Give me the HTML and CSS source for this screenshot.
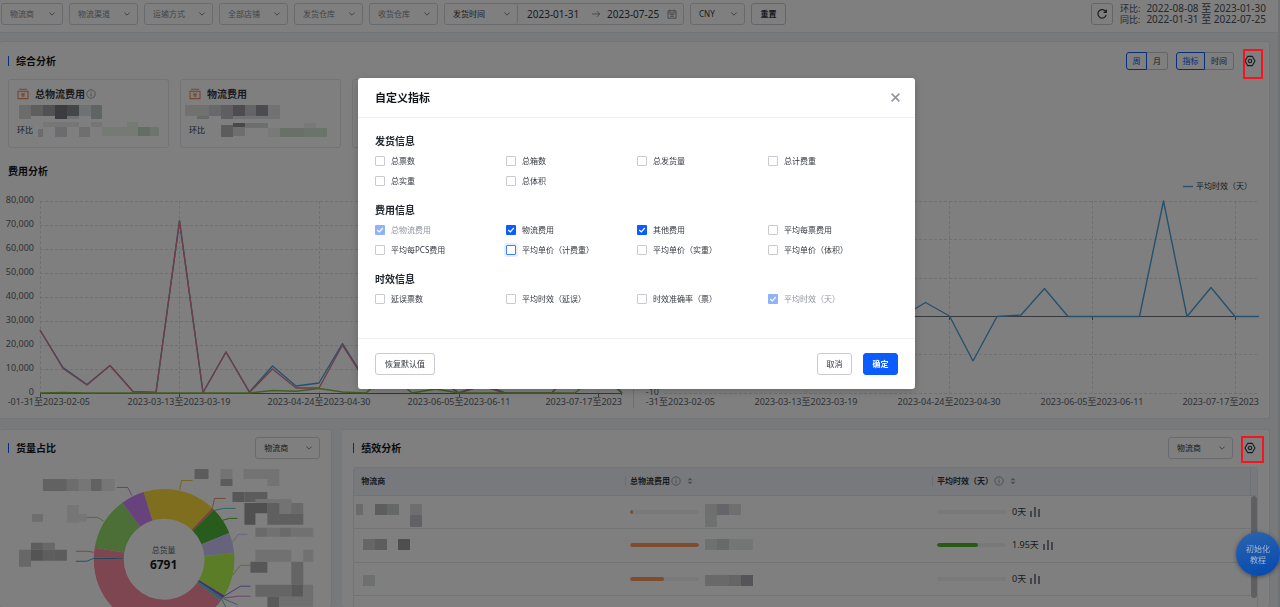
FILE: index.html
```html
<!DOCTYPE html>
<html lang="zh-CN">
<head>
<meta charset="utf-8">
<title>物流分析</title>
<link rel="stylesheet" href="styles.css">
</head>
<body>
<svg class="defs" aria-hidden="true">
  <symbol id="chev" viewBox="0 0 8 8"><path d="M1.4 2.6 4 5.2 6.6 2.6" fill="none" stroke="currentColor" stroke-width="1"/></symbol>
  <symbol id="info" viewBox="0 0 10 10"><circle cx="5" cy="5" r="4.2" fill="none" stroke="currentColor" stroke-width=".8"/><path d="M5 4.3V7.4M5 2.6v.9" stroke="currentColor" stroke-width=".9"/></symbol>
  <symbol id="gear" viewBox="0 0 12 12"><path d="M3.6 1.4h4.8L11 6 8.4 10.6H3.6L1 6Z" fill="none" stroke="currentColor" stroke-width="1.1" stroke-linejoin="round"/><circle cx="6" cy="6" r="1.7" fill="none" stroke="currentColor" stroke-width="1.1"/></symbol>
  <symbol id="money" viewBox="0 0 12 12"><path d="M1 3.2h10v7.4H1ZM2 1.3h8" fill="none" stroke="currentColor" stroke-width="1.1"/><path d="M4.2 4.4 6 6.3l1.8-1.9M6 6.3v3M4.3 6.5h3.4M4.3 7.9h3.4" fill="none" stroke="currentColor" stroke-width=".9"/></symbol>
  <symbol id="sort" viewBox="0 0 6 8"><path d="M.5 3.3 3 .7l2.5 2.6ZM.5 4.7 3 7.3l2.5-2.6Z" fill="currentColor"/></symbol>
  <symbol id="bars" viewBox="0 0 12 12"><path d="M1 5h2v6H1ZM5 1h2v10H5ZM9 3h2v8H9Z" fill="currentColor"/></symbol>
</svg>
<div class="app">
  <header class="topbar">
    <span class="select w-s"><select class="muted" aria-label="物流商"><option>物流商</option></select><svg><use href="#chev"/></svg></span>
    <span class="select w-m"><select class="muted" aria-label="物流渠道"><option>物流渠道</option></select><svg><use href="#chev"/></svg></span>
    <span class="select w-m"><select class="muted" aria-label="运输方式"><option>运输方式</option></select><svg><use href="#chev"/></svg></span>
    <span class="select w-m"><select class="muted" aria-label="全部店铺"><option>全部店铺</option></select><svg><use href="#chev"/></svg></span>
    <span class="select w-m"><select class="muted" aria-label="发货仓库"><option>发货仓库</option></select><svg><use href="#chev"/></svg></span>
    <span class="select w-m"><select class="muted" aria-label="收货仓库"><option>收货仓库</option></select><svg><use href="#chev"/></svg></span>
    <div class="range">
      <span class="select w-range"><select aria-label="时间类型"><option>发货时间</option></select><svg><use href="#chev"/></svg></span>
      <input class="date" aria-label="开始日期" value="2023-01-31">
      <svg class="arrow" viewBox="0 0 10 10"><path d="M1 5h8M6 2.2 8.8 5 6 7.8" fill="none" stroke="currentColor" stroke-width=".9"/></svg>
      <input class="date" aria-label="结束日期" value="2023-07-25">
      <svg class="cal" viewBox="0 0 10 10"><path d="M1 1.8h8v7.4H1ZM1 4h8M3 .5v2.2M7 .5v2.2M3 5.6h4M3 7.3h4" fill="none" stroke="currentColor" stroke-width=".9"/></svg>
    </div>
    <span class="select w-c"><select aria-label="币种"><option>CNY</option></select><svg><use href="#chev"/></svg></span>
    <button class="btn btn-top">重置</button>
    <div class="compare">
      <button class="btn refresh" aria-label="刷新"><svg viewBox="0 0 12 12"><path d="M9.9 4A4.2 4.2 0 1 0 10.2 6.8M10.3 1.6V4.3H7.5" fill="none" stroke="currentColor" stroke-width="1.2"/></svg></button>
      <dl class="periods">
        <dt>环比:</dt><dd>2022-08-08 至 2023-01-30</dd>
        <dt>同比:</dt><dd>2022-01-31 至 2022-07-25</dd>
      </dl>
    </div>
  </header>

  <main class="content">
    <section class="card overview">
      <div class="card-head">
        <h2>综合分析</h2>
        <div class="seg"><button class="on">周</button><button>月</button></div>
        <div class="seg seg-wide"><button class="on">指标</button><button>时间</button></div>
        <button class="gear" aria-label="设置指标"><svg><use href="#gear"/></svg><span class="mark mark-tall"></span></button>
      </div>
      <div class="stats">
        <article class="stat">
          <h3><svg class="money"><use href="#money"/></svg>总物流费用<svg class="info"><use href="#info"/></svg></h3>
          <svg class="mosaic" width="143" height="17"><g transform="translate(-17 -103)"><path fill="#d8d9da" d="M19 106h12v11H19zM19 117h12v3H19z"/><path fill="#bcbdbf" d="M31 106h12v11H31z"/><path fill="#a2a3a6" d="M43 106h12v11H43z"/><path fill="#77797f" d="M55 106h12v14H55z"/><path fill="#8b8c90" d="M67 106h12v11H67z"/><path fill="#e0e3e6" d="M79 106h12v11H79zM67 117h12v3H67z"/><path fill="#c3c8ca" d="M91 106h11v14H91z"/></g></svg>
          <div class="ratio"><span>环比</span><svg class="mosaic" width="120" height="17"><g transform="translate(-36 -122)"><path fill="#ececee" d="M43 123h36v5H43zM91 123h11v5H91z"/><path fill="#d8d8dc" d="M38 130h5v8h-5zM55 128h12v10H55z"/><path fill="#dedfe1" d="M79 128h11v10H79z"/><path fill="#edf4eb" d="M102 128h36v9h-36zM127 123h11v5h-11z"/><path fill="#cbdcc8" d="M138 128h12v9h-12z"/><path fill="#dcebd8" d="M150 128h9v9h-9z"/></g></svg></div>
        </article>
        <article class="stat">
          <h3><svg class="money"><use href="#money"/></svg>物流费用</h3>
          <svg class="mosaic" width="143" height="17"><g transform="translate(-189 -103)"><path fill="#e2e2e1" d="M185 106h24v11h-24z"/><path fill="#cfd3d5" d="M209 106h12v11h-12zM197 117h12v3h-12z"/><path fill="#bebfc7" d="M221 106h12v14h-12z"/><path fill="#9d999c" d="M233 106h12v11h-12z"/><path fill="#c8c9cf" d="M245 106h11v11h-11z"/><path fill="#99979a" d="M256 106h12v11h-12z"/><path fill="#e2e4e6" d="M268 106h12v11h-12zM233 117h47v3h-47z"/></g></svg>
          <div class="ratio"><span>环比</span><svg class="mosaic" width="120" height="17"><g transform="translate(-208 -122)"><path fill="#b9b9bb" d="M221 126h12v12h-12z"/><path fill="#929396" d="M233 124h12v4h-12z"/><path fill="#ddd" d="M233 128h12v9h-12zM245 124h23v5h-23z"/><path fill="#d1e1ce" d="M280 129h24v9h-24z"/><path fill="#d7e8d5" d="M304 129h23v9h-23z"/><path fill="#eef5ec" d="M268 129h12v9h-12zM304 124h12v5h-12z"/></g></svg></div>
        </article>
        <article class="stat"></article>
        <article class="stat"></article>
      </div>
      <h2 class="sub">费用分析</h2>
      <div class="charts">
        <svg class="chart" viewBox="0 180 633 234" role="img" aria-label="费用分析">
          <path class="grid" d="M40 201.5H622M40 225.5H622M40 249.500H622M40 273.500H622M40 297.500H622M40 321.500H622M40 345.500H622M40 369.500H622M40.500 201V393M179.500 201V393M319.500 201V393M459.500 201V393M598.500 201V393"/>
          <path class="axis" d="M40 393.500H622M40.500 393v4M179.500 393v4M319.500 393v4M459.500 393v4M598.500 393v4M621.500 393v2"/>
          <g class="lab end"><text x="34" y="203">80,000</text><text x="34" y="227">70,000</text><text x="34" y="251">60,000</text><text x="34" y="275">50,000</text><text x="34" y="299">40,000</text><text x="34" y="323">30,000</text><text x="34" y="347">20,000</text><text x="34" y="371">10,000</text><text x="34" y="395">0</text></g>
          <g class="lab mid"><text class="end" x="90" y="405">-01-31至2023-02-05</text><text x="179" y="405">2023-03-13至2023-03-19</text><text x="319" y="405">2023-04-24至2023-04-30</text><text x="459" y="405">2023-06-05至2023-06-11</text><text class="end" x="622" y="405">2023-07-17至2023</text></g>
          <path class="line blue" d="M40 330 63 367.500 87 384.500 110 365.500 133 391.500 156 392.500 179.500 221 203 392.500 226 352 249.500 392 272.500 366 296 386 319 383 342.500 343.500 366 381 389 370 412 360 435.500 378 459 393 482 384 505 393H552L575 362 598.500 366 622 393"/>
          <path class="line pink" d="M40 330 63 368.500 87 385 110 365.500 133 391.500 156 392.500 179.500 221 203 392.500 226 352 249.500 392.500 272.500 369 296 388 319 388 342.500 345 366 382 389 372 412 360 435.500 376 459 393 482 386 505 393H552L575 366 598.500 370 622 393"/>
          <path class="line green" d="M40 393 63 392.500 87 393H249L272.500 390.500 296 391.300 319 388.500 342.500 392 366 393 389 373 412 393 435.500 389 459 393H575L598.500 374 622 393"/>
        </svg>
        <svg class="chart" viewBox="633 180 636 234" role="img" aria-label="时效分析">
          <path class="divider" d="M633.500 180V408"/>
          <path class="grid" d="M664 201.500H1259M664 239.500H1259M664 278.500H1259M664 354.500H1259M664 393.500H1259M806.500 201V393M949.500 201V393M1092.500 201V393M1235.500 201V393"/>
          <path class="axis" d="M664 316.500H1259M806.500 316v4M949.500 316v4M1092.500 316v4M1235.500 316v4"/>
          <g class="lab mid"><text class="end" x="659" y="395">-10</text><text class="end" x="715" y="405">-31至2023-02-05</text><text x="806" y="405">2023-03-13至2023-03-19</text><text x="949" y="405">2023-04-24至2023-04-30</text><text x="1092" y="405">2023-06-05至2023-06-11</text><text class="end" x="1259" y="405">2023-07-17至2023</text></g>
          <path class="line blue" d="M664 316.500H902L925.500 302.500 949.500 316 973 361 997 316.500 1021 315 1044.500 288.500 1068 316.500H1139.500L1163.500 201 1187 316.500 1211 287.500 1235 316.500H1259"/>
          <path class="line blue" d="M1183 186.500H1193"/><text class="legend" x="1196" y="189">平均时效（天）</text>
        </svg>
      </div>
    </section>

    <div class="row">
      <section class="card share">
        <div class="card-head">
          <h2>货量占比</h2>
          <span class="select w-b"><select aria-label="占比维度"><option>物流商</option></select><svg><use href="#chev"/></svg></span>
        </div>
        <svg class="donut" viewBox="0 462 332 180" role="img" aria-label="货量占比">
          <g fill="none" stroke-width="30" transform="rotate(-90 164.500 560.500)">
            <circle cx="164.500" cy="560.500" r="55.500" pathLength="360" stroke="#ffdd3c" stroke-dasharray="60 300" stroke-dashoffset="17"/>
            <circle cx="164.500" cy="560.500" r="55.500" pathLength="360" stroke="#e2936c" stroke-dasharray="3 357" stroke-dashoffset="-43"/>
            <circle cx="164.500" cy="560.500" r="55.500" pathLength="360" stroke="#50b838" stroke-dasharray="22.500 337.500" stroke-dashoffset="-45.500"/>
            <circle cx="164.500" cy="560.500" r="55.500" pathLength="360" stroke="#d1c6fa" stroke-dasharray="17 343" stroke-dashoffset="-68"/>
            <circle cx="164.500" cy="560.500" r="55.500" pathLength="360" stroke="#b6fb50" stroke-dasharray="36 324" stroke-dashoffset="-85"/>
            <circle cx="164.500" cy="560.500" r="55.500" pathLength="360" stroke="#8a64d8" stroke-dasharray="2.500 357.500" stroke-dashoffset="-121"/>
            <circle cx="164.500" cy="560.500" r="55.500" pathLength="360" stroke="#58c9cf" stroke-dasharray="2.500 357.500" stroke-dashoffset="-123.500"/>
            <circle cx="164.500" cy="560.500" r="55.500" pathLength="360" stroke="#fb8ca2" stroke-dasharray="144 216" stroke-dashoffset="-126"/>
            <circle cx="164.500" cy="560.500" r="55.500" pathLength="360" stroke="#3f8fbb" stroke-dasharray="1.500 358.500" stroke-dashoffset="-270"/>
            <circle cx="164.500" cy="560.500" r="55.500" pathLength="360" stroke="#fb8ca2" stroke-dasharray="8 352" stroke-dashoffset="-271.500"/>
            <circle cx="164.500" cy="560.500" r="55.500" pathLength="360" stroke="#98de6e" stroke-dasharray="44 316" stroke-dashoffset="-279.500"/>
            <circle cx="164.500" cy="560.500" r="55.500" pathLength="360" stroke="#cf84f8" stroke-dasharray="19.500 340.500" stroke-dashoffset="-323.500"/>
          </g>
          <g fill="none" stroke-width="1">
            <path stroke="#cf84f8" d="M117 488.500h11l4 8"/><path stroke="#e6c83c" d="M193 481.500h-11l-2 10"/><path stroke="#98de6e" d="M87 518.500h11l6 4"/><path stroke="#fb8ca2" d="M76 552.500h12l6 1"/><path stroke="#4aa3d8" d="M76 562.500h11l7-3"/><path stroke="#e2936c" d="M226 499.500h-11l-2 9"/><path stroke="#58c9cf" d="M236 509.500h-12l-9 2"/><path stroke="#50b838" d="M238 519.500h-8l-7 2"/><path stroke="#d1c6fa" d="M248 535.500h-9l-6 8"/><path stroke="#b6e050" d="M251 566.500h-10l-8 10"/><path stroke="#8a7ad8" d="M251 587.500h-10l-18 11"/><path stroke="#d08ad8" d="M251 597.500h-12l-16 2"/><path stroke="#58c9cf" d="M222 600l5 10"/><path stroke="#7fb4d8" d="M224 600l14 6"/>
          </g>
          <path fill="#c4c4c4" d="M43 480h24v12H43zM91 480h11v12H91z"/><path fill="#dadada" d="M67 480h12v12H67z"/><path fill="#ececec" d="M79 480h12v12H79zM102 480h13v12h-13zM67 506h12v18H67zM79 515h8v8h-8z"/><path fill="#dcdcdc" d="M32 515h11v8H32z"/>
          <path fill="#d0d0d0" d="M19 551h12v17H19zM43 544h12v7H43z"/><path fill="#a9a9a9" d="M31 551h12v11H31z"/><path fill="#bdbdbd" d="M31 544h12v7H31zM43 551h12v11H43z"/><path fill="#b8b8b8" d="M55 551h12v11H55z"/>
          <path fill="#b9b9b9" d="M195 470h14v10h-14zM221 480h12v7h-12z"/><path fill="#e7e7e7" d="M221 470h12v10h-12zM244 470h36v10h-36zM268 480h12v7h-12z"/><path fill="#aeaeae" d="M233 493h12v10h-12zM280 504h12v11h-12zM251 563h17v11h-17z"/><path fill="#b8b8b8" d="M245 493h23v10h-23z"/><path fill="#e6e6e6" d="M256 500h36v15h-36z"/><path fill="#a0a0a0" d="M245 504h23v10h-23zM245 514h11v12h-11z"/><path fill="#bfbfbf" d="M268 504h12v22h-12zM280 515h24v11h-24z"/><path fill="#d4d4d4" d="M292 504h12v11h-12zM256 529h12v9h-12zM280 529h12v9h-12z"/><path fill="#e2e2e2" d="M268 529h12v9h-12zM292 529h22v9h-22zM256 551h12v12h-12zM304 551h10v12h-10zM292 551h-24v12h24z"/><path fill="#cacaca" d="M292 563h12v23h-12zM256 586h36v12h-36z"/><path fill="#b3b3b3" d="M292 586h12v12h-12zM268 598h12v12h-12z"/><path fill="#dedede" d="M304 586h10v22h-10zM280 598h24v10h-24z"/>
          <text class="donut-label" x="164" y="554">总货量</text><text class="donut-total" x="164" y="570">6791</text>
        </svg>
      </section>

      <section class="card perf">
        <div class="card-head">
          <h2>绩效分析</h2>
          <span class="select w-b"><select aria-label="绩效维度"><option>物流商</option></select><svg><use href="#chev"/></svg></span>
          <button class="gear" aria-label="设置绩效指标"><svg><use href="#gear"/></svg><span class="mark mark-low"></span></button>
        </div>
        <div class="table-wrap">
          <table>
            <colgroup><col class="c1"><col class="c2"><col class="c3"><col class="c4"></colgroup>
            <thead><tr><th><div>物流商</div></th><th><div>总物流费用<svg class="info"><use href="#info"/></svg><svg class="sort"><use href="#sort"/></svg></div></th><th><div>平均时效（天）<svg class="info"><use href="#info"/></svg><svg class="sort"><use href="#sort"/></svg></div></th><th></th></tr></thead>
            <tbody>
              <tr><td><svg class="mosaic" width="70" height="32"><path fill="#d6d6d6" d="M0 8h7v11H0z"/><path fill="#b8bbbb" d="M19 8h12v11H19z"/><path fill="#cdd0d0" d="M31 8h12v11H31z"/><path fill="#dddde2" d="M54 8h12v11H54z"/><path fill="#c5c5ca" d="M54 19h12v12H54z"/></svg></td>
                <td><div class="cell"><span class="bar"><i class="orange" style="width:4%"></i></span><svg class="mosaic" width="54" height="32"><path fill="#dedede" d="M0 8h12v11H0zM24 8h12v11H24z"/><path fill="#cacad2" d="M12 8h12v11H12z"/><path fill="#dfe3e3" d="M0 19h12v12H0z"/></svg></div></td>
                <td><div class="cell"><span class="bar"></span>0天<svg class="mini"><use href="#bars"/></svg></div></td><td></td></tr>
              <tr><td><svg class="mosaic" width="70" height="32"><path fill="#ccc" d="M7 10h12v11H7z"/><path fill="#b9bbbb" d="M19 10h12v11H19z"/><path fill="#9d9da2" d="M42 10h12v11H42z"/></svg></td>
                <td><div class="cell"><span class="bar"><i class="orange" style="width:100%"></i></span><svg class="mosaic" width="54" height="32"><path fill="#dfe3e3" d="M0 10h12v11H0z"/><path fill="#cfd2d5" d="M12 10h12v11H12z"/><path fill="#e8eaea" d="M24 10h24v11H24z"/></svg></div></td>
                <td><div class="cell"><span class="bar"><i class="green" style="width:59%"></i></span>1.95天<svg class="mini"><use href="#bars"/></svg></div></td><td></td></tr>
              <tr><td><svg class="mosaic" width="70" height="32"><path fill="#dcdfdf" d="M7 12h12v11H7z"/></svg></td>
                <td><div class="cell"><span class="bar"><i class="orange" style="width:49%"></i></span><svg class="mosaic" width="54" height="32"><path fill="#d2d2d3" d="M0 12h12v11H0zM12 12h12v11H12z"/><path fill="#c8cccc" d="M24 12h12v11H24z"/><path fill="#a8a8b2" d="M36 12h12v11H36z"/></svg></div></td>
                <td><div class="cell"><span class="bar"></span>0天<svg class="mini"><use href="#bars"/></svg></div></td><td></td></tr>
              <tr><td></td><td></td><td></td><td></td></tr>
            </tbody>
          </table>
          <span class="thumb"></span>
        </div>
      </section>
    </div>
  </main>
</div>

<div class="overlay">
  <div class="modal" role="dialog" aria-labelledby="dlg">
    <header class="modal-head"><h1 id="dlg">自定义指标</h1><button class="close" aria-label="关闭"><svg viewBox="0 0 10 10"><path d="M1.500 1.500l7 7M8.500 1.500l-7 7" stroke="currentColor" stroke-width="1.400"/></svg></button></header>
    <div class="modal-body">
      <fieldset><legend>发货信息</legend><div class="opts">
        <label><input type="checkbox">总票数</label><label><input type="checkbox">总箱数</label><label><input type="checkbox">总发货量</label><label><input type="checkbox">总计费重</label>
        <label><input type="checkbox">总实重</label><label><input type="checkbox">总体积</label></div></fieldset>
      <fieldset><legend>费用信息</legend><div class="opts">
        <label class="off"><input type="checkbox" checked disabled>总物流费用</label><label><input type="checkbox" checked>物流费用</label><label><input type="checkbox" checked>其他费用</label><label><input type="checkbox">平均每票费用</label>
        <label><input type="checkbox">平均每PCS费用</label><label><input type="checkbox" class="focus">平均单价（计费重）</label><label><input type="checkbox">平均单价（实重）</label><label><input type="checkbox">平均单价（体积）</label></div></fieldset>
      <fieldset><legend>时效信息</legend><div class="opts">
        <label><input type="checkbox">延误票数</label><label><input type="checkbox">平均时效（延误）</label><label><input type="checkbox">时效准确率（票）</label><label class="off"><input type="checkbox" checked disabled>平均时效（天）</label></div></fieldset>
    </div>
    <footer class="modal-foot"><button class="btn reset">恢复默认值</button><button class="btn">取消</button><button class="btn primary">确定</button></footer>
  </div>
</div>
<button class="fab">初始化<br>教程</button>
</body>
</html>
```
FILE: styles.css
```css
* { box-sizing: border-box; }
body { margin: 0; font: 8px/12px "Noto Sans", "Noto Sans CJK SC", sans-serif; color: #33373f; }
button, input, select { font: inherit; color: inherit; margin: 0; }
button { cursor: pointer; padding: 0; }
h1, h2, h3, dl, dd { margin: 0; }
svg { display: block; flex: none; }
.defs { position: absolute; width: 0; height: 0; }
.app { height: 100vh; overflow: hidden; display: flex; flex-direction: column; background: #eff2f6; border-right: 2px solid #dfe2e6; }

.topbar { flex: none; display: flex; align-items: center; gap: 6px; height: 33px; padding: 0 12px 5px 1px; background: #fff; border-bottom: 1px solid #e6e8ec; }
.select { position: relative; display: block; }
.select select { appearance: none; width: 100%; height: 22px; padding: 0 16px 0 8px; border: 1px solid #d3d5da; border-radius: 3px; background: #fff; outline: 0; }
.select select.muted { color: #868b94; }
.select svg { position: absolute; right: 7px; top: 7px; width: 8px; height: 8px; color: #80858e; pointer-events: none; }
.w-s { width: 62px; }
.w-m { width: 69px; }
.w-c { width: 55px; }
.w-b { width: 65px; }
.w-range { width: 73px; }
.range { display: flex; align-items: center; width: 240px; height: 22px; border: 1px solid #d3d5da; border-radius: 3px; }
.range .select select { height: 20px; border-width: 0 1px 0 0; }
.range .select svg { top: 6px; }
.date { width: 73px; padding: 0 0 0 9px; border: 0; background: none; font-size: 10px; outline: 0; }
.arrow + .date { padding-left: 6px; width: 66px; }
.arrow, .cal { width: 10px; height: 10px; color: #868b94; }
.btn { height: 22px; padding: 0 8px; border: 1px solid #c9cbd1; border-radius: 3px; background: #fff; }
.btn-top { width: 35px; font-weight: 700; }
.compare { display: flex; align-items: center; gap: 7px; margin-left: auto; }
.refresh { width: 22px; padding: 0 4px; }
.refresh svg { width: 12px; height: 12px; }
.periods { display: grid; grid-template-columns: auto auto; column-gap: 6px; font-size: 10px; line-height: 11px; color: #4c5058; }
.periods dt { font-size: 9px; }

.content { flex: 1; min-height: 0; padding: 8px 8px 0 0; display: flex; flex-direction: column; gap: 10px; }
.card { background: #fff; border: 1px solid #e6e8ec; border-left: 0; border-radius: 3px; }
.overview { flex: none; padding: 8px 0 4px; }
.card-head { display: flex; align-items: center; height: 22px; padding: 0 9px 0 8px; }
h2 { font-size: 10px; line-height: 14px; font-weight: 700; color: #111418; }
.card-head h2 { position: relative; margin-right: auto; padding-left: 8px; }
.card-head h2::before { content: ""; position: absolute; left: 0; top: 2px; width: 1px; height: 10px; background: #0a5cff; }
.seg { display: flex; margin-right: 8px; }
.seg button { width: 21px; height: 18px; border: 1px solid #c9cbd1; background: #fff; }
.seg-wide { margin-right: 6px; }
.seg-wide button { width: 29px; }
.seg button:first-child { border-radius: 3px 0 0 3px; }
.seg button:last-child { border-left: 0; border-radius: 0 3px 3px 0; }
.seg button.on { color: #0a5cff; border-color: #0a5cff; }
.gear { position: relative; width: 20px; height: 20px; border: 0; background: none; padding: 0 4px; color: #33373f; }
.gear svg { width: 12px; height: 12px; }
.mark { position: absolute; z-index: 20; border: 2px solid #f5151f; }
.mark-tall { left: 3px; top: -2px; width: 20px; height: 30px; }
.mark-low { left: 1px; top: -2px; width: 23px; height: 27px; }

.stats { display: grid; grid-template-columns: repeat(auto-fill, 161px); gap: 11px; padding: 7px 8px 0; }
.stat { height: 69px; padding: 6px 8px; border: 1px solid #e6e8ec; border-radius: 3px; }
.stat h3 { display: flex; align-items: center; height: 16px; font-size: 10px; line-height: 16px; }
.money { width: 12px; height: 12px; margin-right: 6px; color: #f08a5c; }
.info { width: 10px; height: 10px; margin-left: 1px; color: #868b94; }
.mosaic { overflow: visible; }
.ratio { display: flex; align-items: center; gap: 3px; height: 17px; margin-top: 2px; white-space: nowrap; }
.sub { padding: 16px 8px 2px; }
.charts { display: grid; grid-template-columns: 633fr 636fr; }
.chart { width: 100%; height: auto; }
.grid { fill: none; stroke: #dfe1e6; stroke-dasharray: 3 2; }
.axis { fill: none; stroke: #6e7079; }
.divider { stroke: #dcdfe4; }
.line { fill: none; stroke-width: 1.4; stroke-linejoin: round; }
.blue { stroke: #4ba3db; }
.pink { stroke: #dd7a90; }
.green { stroke: #83bf45; }
.lab { font-size: 9px; fill: #60646d; }
.mid { text-anchor: middle; }
.end { text-anchor: end; }
.legend { font-size: 8px; fill: #33373f; }

.row { flex: 1; min-height: 0; display: grid; grid-template-columns: 332fr 927fr; gap: 10px; }
.row .card { padding-top: 7px; min-width: 0; border-bottom: 0; overflow: hidden; }
.share .card-head { padding-right: 11px; }
.donut { width: 100%; height: auto; margin-top: 2px; }
.donut-label { font-size: 8px; text-anchor: middle; fill: #60646d; }
.donut-total { font-size: 12px; font-weight: 700; text-anchor: middle; fill: #15181d; }
.perf .card-head { padding-left: 11px; }
.perf .gear { margin-left: 7px; }
.table-wrap { position: relative; margin: 8px 11px 0; border: 1px solid #e6e8ec; border-radius: 3px 3px 0 0; }
table { width: 100%; table-layout: fixed; border-collapse: collapse; }
.c1 { width: 30%; }
.c2 { width: 34%; }
.c4 { width: 7px; }
th { height: 27px; padding: 0; background: #eff3f8; text-align: left; }
th div { display: flex; align-items: center; height: 10px; padding-left: 4px; border-left: 1px solid #d9dce2; }
th:first-child div { padding-left: 6px; border-left-color: transparent; }
th:last-child { border-left: 1px solid #e0e3e8; }
th .sort { width: 6px; height: 8px; margin-left: 6px; color: #9a9ea7; }
td { height: 33px; padding: 0 0 0 5px; border-top: 1px solid #e4e6ea; }
td:first-child { padding-left: 2px; }
tr:nth-child(2) td { height: 34px; }
.cell { display: flex; align-items: center; gap: 6px; font-size: 9px; }
.bar { width: 69px; height: 4px; border-radius: 2px; background: #f0f2f6; overflow: hidden; }
.bar i { display: block; height: 4px; border-radius: 2px; }
.bar .orange { background: #fa9a5c; }
.bar .green { background: #4eb52e; }
.mini { width: 12px; height: 12px; margin-left: -3px; color: #868b94; }
.thumb { position: absolute; right: 0; top: 28px; width: 6px; height: 102px; border-radius: 3px; background: #c1c1c4; }

.overlay { position: fixed; inset: 0; z-index: 10; padding: 78px 7px 0 0; background: rgba(0, 0, 0, .5); }
.modal { width: 557px; margin: 0 auto; background: #fff; border-radius: 3px; box-shadow: 0 2px 8px rgba(0, 0, 0, .2); }
.modal-head { display: flex; align-items: center; justify-content: space-between; height: 40px; padding: 0 14px 0 17px; border-bottom: 1px solid #eceef2; }
h1 { font-size: 11px; line-height: 16px; color: #111418; }
.close { width: 11px; height: 11px; border: 0; background: none; color: #90949d; }
.close svg { width: 11px; height: 11px; }
.modal-body { display: grid; gap: 9px; padding: 13px 16px 29px 17px; }
fieldset { margin: 0; padding: 0; border: 0; min-width: 0; }
legend { padding: 0; font-size: 10px; line-height: 20px; font-weight: 700; color: #22262e; }
.opts { display: grid; grid-template-columns: repeat(4, 1fr); }
label { display: flex; align-items: center; gap: 6px; height: 20px; }
label.off { color: #90949d; }
input[type="checkbox"] { appearance: none; width: 10px; height: 10px; border: 1px solid #c9cbd1; border-radius: 1px; background: #fff center / 10px 10px no-repeat; }
input[type="checkbox"]:checked { border: 0; background-color: #0a5cff; background-image: url("data:image/svg+xml,%3Csvg xmlns='http://www.w3.org/2000/svg' viewBox='0 0 10 10'%3E%3Cpath d='M2.200 5 4.300 7 7.800 3' fill='none' stroke='white' stroke-width='1.200'/%3E%3C/svg%3E"); }
input[type="checkbox"]:disabled { background-color: #8fb3f9; }
input.focus { border-color: #3d7fff; box-shadow: 0 0 0 2px #e8effc; }
.modal-foot { display: flex; align-items: center; gap: 11px; height: 51px; padding: 0 17px; border-top: 1px solid #eceef2; }
.modal-foot .btn { width: 35px; }
.modal-foot .reset { width: 60px; margin-right: auto; }
.modal-foot .primary { border-color: #0a5cff; background: #0a5cff; color: #fff; font-weight: 700; }
.fab { position: fixed; z-index: 15; right: 0; bottom: 31px; width: 44px; height: 44px; border: 0; border-radius: 50%; background: linear-gradient(165deg, #2c64ae, #0349b0); box-shadow: 0 1px 4px rgba(0, 0, 0, .4); color: #a9b9d0; line-height: 11px; }
```
